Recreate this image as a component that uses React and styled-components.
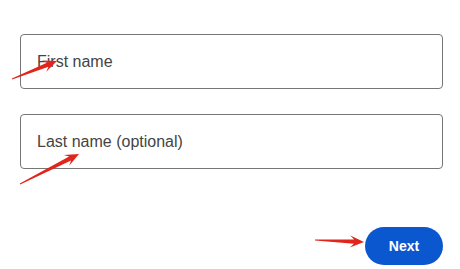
import React from "react";
import styled, { createGlobalStyle } from "styled-components";

const Global = createGlobalStyle`
  html, body { margin: 0; padding: 0; background: #fff; }
  body { font-family: "Liberation Sans", Arial, sans-serif; }
`;

const Page = styled.div`
  position: relative;
  width: 460px;
  height: 269px;
  overflow: hidden;
  background: #fff;
`;

const Form = styled.form`
  display: flex;
  flex-direction: column;
  gap: 25px;
  padding: 34px 17px 0 20px;
`;

const Field = styled.label`
  display: flex;
  align-items: center;
  box-sizing: border-box;
  height: 55px;
  padding: 0 16px;
  border: 1px solid #767676;
  border-radius: 4px;
  font-size: 16px;
  color: #444;
`;

const Actions = styled.div`
  display: flex;
  justify-content: flex-end;
  margin-top: 33px;
`;

const Button = styled.button`
  width: 78px;
  height: 38px;
  border: none;
  border-radius: 19px;
  background: #0b57d0;
  color: #fff;
  font-family: "Liberation Sans", Arial, sans-serif;
  font-weight: 700;
  font-size: 14px;
  cursor: pointer;
`;

const Overlay = styled.svg`
  position: absolute;
  left: 0;
  top: 0;
  pointer-events: none;
`;

function Arrow({ x1, y1, x2, y2 }) {
  const dx = x2 - x1;
  const dy = y2 - y1;
  const len = Math.hypot(dx, dy);
  const ux = dx / len;
  const uy = dy / len;
  const px = -uy;
  const py = ux;
  const hl = 14;
  const hw = 6;
  const bx = x2 - ux * hl;
  const by = y2 - uy * hl;
  const notchX = x2 - ux * (hl - 4);
  const notchY = y2 - uy * (hl - 4);
  const tail = 0.4;
  const shaft = 2.2;
  const pts = [
    [x1 + px * tail, y1 + py * tail],
    [notchX + px * shaft, notchY + py * shaft],
    [bx + px * hw, by + py * hw],
    [x2, y2],
    [bx - px * hw, by - py * hw],
    [notchX - px * shaft, notchY - py * shaft],
    [x1 - px * tail, y1 - py * tail],
  ]
    .map((p) => p.map((v) => v.toFixed(1)).join(","))
    .join(" ");
  return <polygon points={pts} fill="#e0261c" />;
}

export default function App() {
  return (
    <Page>
      <Global />
      <Form onSubmit={(e) => e.preventDefault()}>
        <Field>First name</Field>
        <Field>Last name (optional)</Field>
        <Actions>
          <Button type="submit">Next</Button>
        </Actions>
      </Form>
      <Overlay width="460" height="269" viewBox="0 0 460 269">
        <Arrow x1={12} y1={79} x2={57} y2={61} />
        <Arrow x1={20} y1={184} x2={79} y2={154} />
        <Arrow x1={315} y1={240} x2={364} y2={242} />
      </Overlay>
    </Page>
  );
}
